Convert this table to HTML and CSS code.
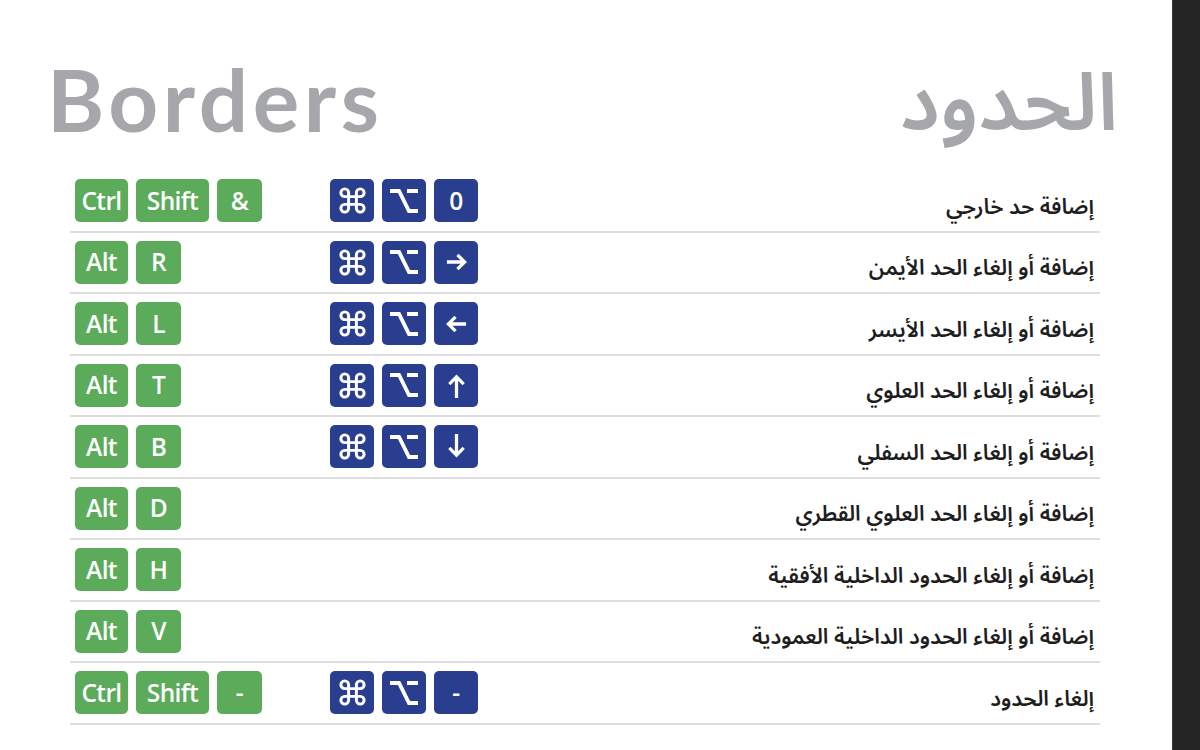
FILE: index.html
```html
<!DOCTYPE html>
<html lang="en">
<head>
<meta charset="utf-8">
<title>Borders</title>
<link rel="stylesheet" href="styles.css">
</head>
<body>
<div class="page">
  <main class="sheet">
    <header class="titles">
      <h1 class="title-en">Borders</h1>
      <h1 class="title-ar" lang="ar" dir="rtl">الحدود</h1>
    </header>

    <section class="table">
      <div class="row">
        <div class="keys win"><span class="key g w53">Ctrl</span><span class="key g w73">Shift</span><span class="key g">&amp;</span></div>
        <div class="keys mac">
          <span class="key b"><svg class="ic cmd" viewBox="0 0 24 24"><path d="M15 6v12a3 3 0 1 0 3-3H6a3 3 0 1 0 3 3V6a3 3 0 1 0-3 3h12a3 3 0 1 0-3-3"/></svg></span>
          <span class="key b"><svg class="ic opt" viewBox="0 0 28 24"><path d="M0 2h9l10 20h9M17 2h11"/></svg></span>
          <span class="key b">0</span>
        </div>
        <div class="desc" lang="ar" dir="rtl">إضافة حد خارجي</div>
      </div>

      <div class="row">
        <div class="keys win"><span class="key g w53">Alt</span><span class="key g">R</span></div>
        <div class="keys mac">
          <span class="key b"><svg class="ic cmd" viewBox="0 0 24 24"><path d="M15 6v12a3 3 0 1 0 3-3H6a3 3 0 1 0 3 3V6a3 3 0 1 0-3 3h12a3 3 0 1 0-3-3"/></svg></span>
          <span class="key b"><svg class="ic opt" viewBox="0 0 28 24"><path d="M0 2h9l10 20h9M17 2h11"/></svg></span>
          <span class="key b"><svg class="ic arrow" viewBox="0 0 24 24"><path d="M2 12h18M13 4.5l7.5 7.5-7.5 7.5"/></svg></span>
        </div>
        <div class="desc" lang="ar" dir="rtl">إضافة أو إلغاء الحد الأيمن</div>
      </div>

      <div class="row">
        <div class="keys win"><span class="key g w53">Alt</span><span class="key g">L</span></div>
        <div class="keys mac">
          <span class="key b"><svg class="ic cmd" viewBox="0 0 24 24"><path d="M15 6v12a3 3 0 1 0 3-3H6a3 3 0 1 0 3 3V6a3 3 0 1 0-3 3h12a3 3 0 1 0-3-3"/></svg></span>
          <span class="key b"><svg class="ic opt" viewBox="0 0 28 24"><path d="M0 2h9l10 20h9M17 2h11"/></svg></span>
          <span class="key b"><svg class="ic arrow" viewBox="0 0 24 24"><path d="M22 12H4M11 4.5L3.5 12l7.5 7.5"/></svg></span>
        </div>
        <div class="desc" lang="ar" dir="rtl">إضافة أو إلغاء الحد الأيسر</div>
      </div>

      <div class="row">
        <div class="keys win"><span class="key g w53">Alt</span><span class="key g">T</span></div>
        <div class="keys mac">
          <span class="key b"><svg class="ic cmd" viewBox="0 0 24 24"><path d="M15 6v12a3 3 0 1 0 3-3H6a3 3 0 1 0 3 3V6a3 3 0 1 0-3 3h12a3 3 0 1 0-3-3"/></svg></span>
          <span class="key b"><svg class="ic opt" viewBox="0 0 28 24"><path d="M0 2h9l10 20h9M17 2h11"/></svg></span>
          <span class="key b"><svg class="ic arrow vert" viewBox="0 0 24 26"><path d="M12 26V4M4.5 11.5L12 4l7.5 7.5"/></svg></span>
        </div>
        <div class="desc" lang="ar" dir="rtl">إضافة أو إلغاء الحد العلوي</div>
      </div>

      <div class="row">
        <div class="keys win"><span class="key g w53">Alt</span><span class="key g">B</span></div>
        <div class="keys mac">
          <span class="key b"><svg class="ic cmd" viewBox="0 0 24 24"><path d="M15 6v12a3 3 0 1 0 3-3H6a3 3 0 1 0 3 3V6a3 3 0 1 0-3 3h12a3 3 0 1 0-3-3"/></svg></span>
          <span class="key b"><svg class="ic opt" viewBox="0 0 28 24"><path d="M0 2h9l10 20h9M17 2h11"/></svg></span>
          <span class="key b"><svg class="ic arrow vert" viewBox="0 0 24 26"><path d="M12 0v22M4.5 14.5L12 22l7.5-7.5"/></svg></span>
        </div>
        <div class="desc" lang="ar" dir="rtl">إضافة أو إلغاء الحد السفلي</div>
      </div>

      <div class="row">
        <div class="keys win"><span class="key g w53">Alt</span><span class="key g">D</span></div>
        <div class="keys mac"></div>
        <div class="desc" lang="ar" dir="rtl">إضافة أو إلغاء الحد العلوي القطري</div>
      </div>

      <div class="row">
        <div class="keys win"><span class="key g w53">Alt</span><span class="key g">H</span></div>
        <div class="keys mac"></div>
        <div class="desc" lang="ar" dir="rtl">إضافة أو إلغاء الحدود الداخلية الأفقية</div>
      </div>

      <div class="row">
        <div class="keys win"><span class="key g w53">Alt</span><span class="key g">V</span></div>
        <div class="keys mac"></div>
        <div class="desc" lang="ar" dir="rtl">إضافة أو إلغاء الحدود الداخلية العمودية</div>
      </div>

      <div class="row">
        <div class="keys win"><span class="key g w53">Ctrl</span><span class="key g w73">Shift</span><span class="key g">-</span></div>
        <div class="keys mac">
          <span class="key b"><svg class="ic cmd" viewBox="0 0 24 24"><path d="M15 6v12a3 3 0 1 0 3-3H6a3 3 0 1 0 3 3V6a3 3 0 1 0-3 3h12a3 3 0 1 0-3-3"/></svg></span>
          <span class="key b"><svg class="ic opt" viewBox="0 0 28 24"><path d="M0 2h9l10 20h9M17 2h11"/></svg></span>
          <span class="key b">-</span>
        </div>
        <div class="desc" lang="ar" dir="rtl">إلغاء الحدود</div>
      </div>
    </section>
  </main>
  <aside class="bar"></aside>
</div>
</body>
</html>
```

FILE: styles.css
```css
* { box-sizing: border-box; }

html, body {
  margin: 0;
  padding: 0;
  background: #ffffff;
}

.page {
  display: flex;
  width: 1200px;
  height: 750px;
  overflow: hidden;
}

.sheet {
  width: 1172px;
  flex: none;
  background: #ffffff;
}

.bar {
  flex: 1;
  background: #252525;
  border-left: 1px solid #3a3a3a;
}

.titles {
  display: flex;
  justify-content: space-between;
  align-items: flex-start;
  height: 171px;
  padding: 55px 54px 0 47px;
}

.title-en {
  margin: 0;
  font-family: Lato, "Liberation Sans", sans-serif;
  font-weight: 700;
  font-size: 87px;
  line-height: 1;
  color: #a6a7aa;
  letter-spacing: 4.6px;
}

.title-ar {
  margin: 0;
  margin-top: 10px;
  font-family: "Noto Sans Arabic", "DejaVu Sans", sans-serif;
  font-weight: 600;
  font-size: 80px;
  line-height: 1;
  color: #a6a7aa;
}

.table {
  margin-left: 70px;
  width: 1030px;
}

.row {
  display: grid;
  grid-template-columns: 255px 160px 1fr;
  align-items: center;
  height: 61.5px;
  padding-left: 5px;
  padding-right: 6px;
  border-bottom: 2px solid #dedede;
}

.keys {
  display: flex;
  gap: 8px;
  align-items: center;
}

.key {
  display: flex;
  align-items: center;
  justify-content: center;
  width: 45px;
  height: 43px;
  border-radius: 5px;
  color: #ffffff;
  font-family: "Open Sans", "Liberation Sans", sans-serif;
  font-weight: 600;
  font-size: 24.5px;
  line-height: 1;
  letter-spacing: -0.6px;
}

.key.g { background: #5bab5b; }
.key.b { background: #293e8e; width: 44px; }
.key.w53 { width: 53px; }
.key.w73 { width: 73px; }

.ic {
  width: 24px;
  height: 24px;
  fill: none;
  stroke: #ffffff;
  stroke-width: 2.6;
  stroke-linecap: butt;
  stroke-linejoin: miter;
}

.ic.cmd {
  width: 31px;
  height: 31px;
  stroke-width: 2.3;
}

.ic.opt {
  width: 28px;
  height: 24px;
  stroke-width: 3.8;
}

.ic.arrow {
  width: 23px;
  height: 24px;
  stroke-width: 3.4;
}

.ic.arrow.vert {
  height: 25px;
}

.desc {
  font-family: "Noto Sans Arabic", "DejaVu Sans", sans-serif;
  font-weight: 600;
  font-size: 21.5px;
  color: #1e1e1e;
  text-align: right;
  padding-top: 12px;
}
```
